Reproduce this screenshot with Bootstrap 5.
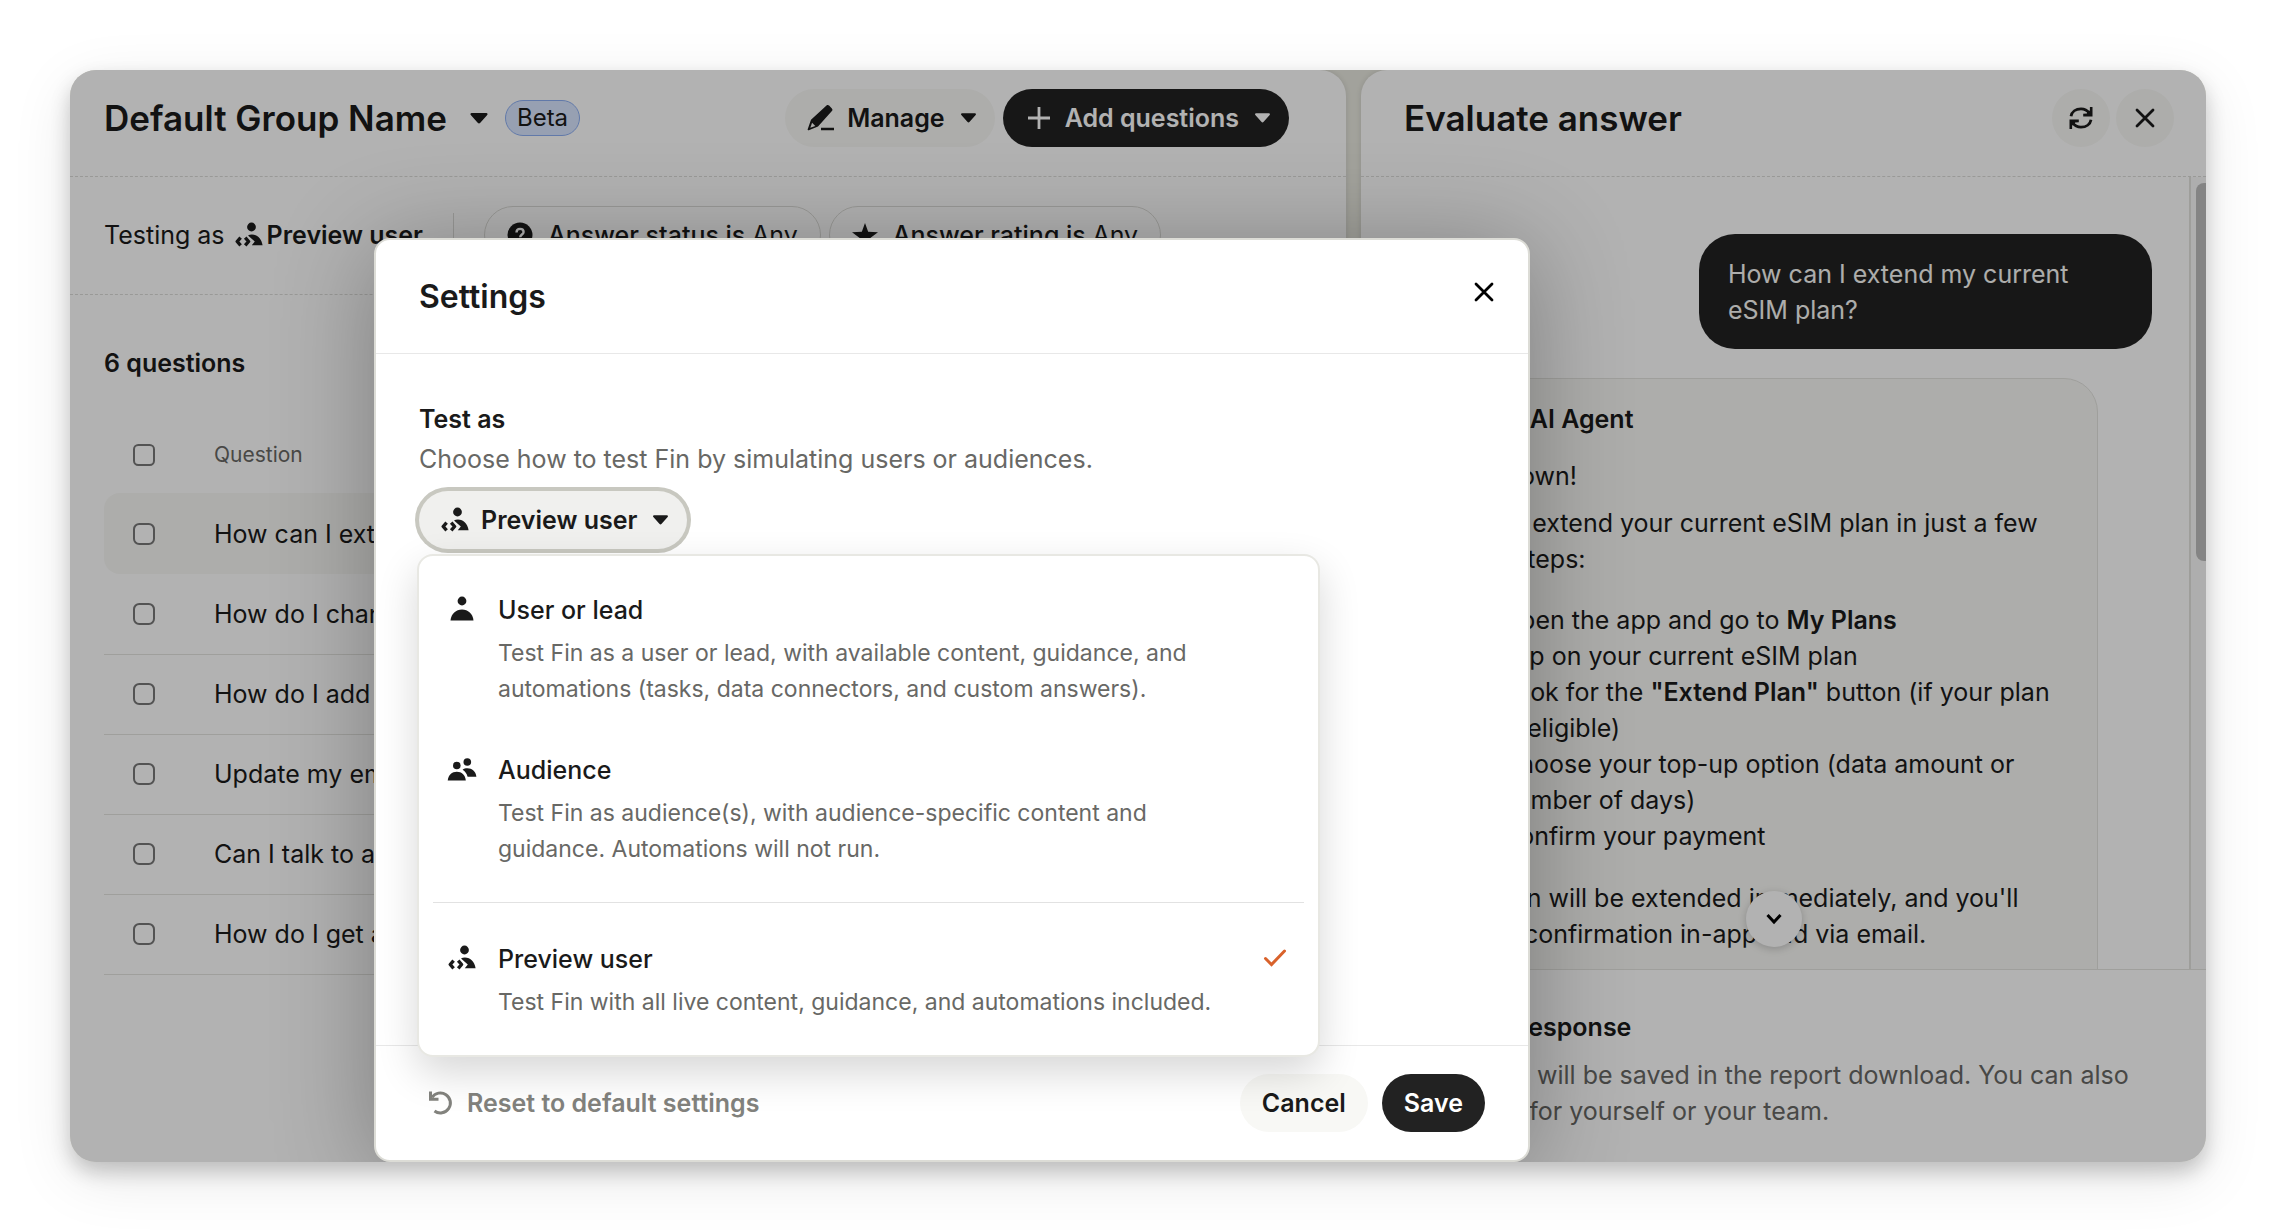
<!DOCTYPE html>
<html lang="en">
<head>
<meta charset="utf-8">
<meta name="viewport" content="width=device-width, initial-scale=1">
<title>Default Group Name – Settings</title>
<link href="https://cdn.jsdelivr.net/npm/bootstrap@5.3.0/dist/css/bootstrap.min.css" rel="stylesheet">
<style>
  :root { --ink:#1a1a1a; --muted:#686865; --line:#e6e6e3; --soft:#f8f8f5; }
  body { font-family: Inter, "Liberation Sans", sans-serif; font-size:25px; line-height:36px; color:var(--ink); background:#fff; padding:70px; }
  .frame { position:relative; min-height:calc(100vh - 140px); border-radius:26px; overflow:hidden; background:#e9e9e0; gap:15px; }
  .frame-shadow { border-radius:26px; box-shadow:0 10px 20px rgba(0,0,0,.2), 0 16px 60px rgba(0,0,0,.1); }
  .panel { background:#fff; border-radius:26px; box-shadow:0 0 6px rgba(0,0,0,.12); min-width:0; }
  .panel-main { flex:1276 1 0; }
  .panel-side { flex:845 1 0; }
  .panel-head { padding:19px 57px 29px 34px; border-bottom:1px dashed #dcdcd8; height:107px; }
  .panel-side .panel-head { padding-left:43px; padding-right:32px; }
  .panel-title { font-size:35px; line-height:58px; font-weight:600; margin:0; }
  .panel-caret { margin:0 16px 0 22px; }
  .beta { font-size:24px; line-height:34px; font-weight:400; color:var(--ink); background:#d9e6ff; border:1px solid #8caef2; border-radius:18px; padding:0 11px; }
  .pill { height:58px; border-radius:29px; font-size:25px; line-height:36px; font-weight:600; border:0; padding:0 22px; display:inline-flex; align-items:center; color:var(--ink); }
  .pill-menu { padding-right:18px; gap:12px; }
  .pill-menu .tip { margin-left:3px; }
  .pill-soft, .pill-soft:hover { background:var(--soft); color:var(--ink); }
  .pill-dark, .pill-dark:hover { background:#222; color:#fff; }
  .pill-line { background:#fff; border:1px solid #dcdcd8; font-weight:500; gap:15px; }
  .pill-line .any { font-weight:400; }
  .pill-round { width:58px; padding:0; justify-content:center; }
  .round-pair { gap:6px; }
  .filters { padding:29px 34px 30px; border-bottom:1px dashed #dcdcd8; height:118px; white-space:nowrap; }
  .filters .coder { margin:0 4px 0 10px; }
  .filters .rule { width:1px; height:44px; margin:0 30px; background:#dcdcd8; }
  .questions { padding:50px 34px 0; }
  .questions h2 { font-size:25px; line-height:36px; font-weight:600; margin:0 0 36px; }
  .q-table { --bs-table-bg:transparent; color:var(--ink); margin:0; }
  .q-table td, .q-table th { height:80px; vertical-align:middle; padding:0; border-bottom:1px solid #e4e4e0; color:var(--ink); }
  .q-table thead th { height:76px; border:0; font-size:21px; font-weight:400; color:var(--muted); }
  .q-table .picked td { height:81px; background:var(--soft); border:0; }
  .q-table .picked td:first-child { border-radius:16px 0 0 16px; }
  .q-table .picked td:last-child { border-radius:0 16px 16px 0; }
  .q-table .tick { width:110px; padding-left:29px; }
  .q-table input { width:22px; height:22px; margin:0; display:block; border:2px solid #777; border-radius:5px; }
  .chat { height:792px; overflow:hidden; }
  .chat-body { flex:1; padding:57px 37px 0 44px; border-right:2px solid #e2e2df; min-width:0; }
  .chat-rail { width:15px; background:#fafafa; padding:6px 0 0 5px; }
  .chat-thumb { height:378px; width:20px; border-radius:8px; background:#bebebe; }
  .ask { width:453px; background:#222; color:#f8f8f5; border-radius:36px; padding:22px 29px 21px; margin:0 0 29px auto; }
  .reply { margin-right:54px; height:800px; background:var(--soft); border:1px solid #e4e4e0; border-radius:34px; padding:22px 24px; white-space:nowrap; }
  .reply p, .reply ol { margin:0; }
  .reply .greeting { padding:21px 0 11px; }
  .reply ol { padding:25px 0 26px 71px; }
  .reply b { font-weight:600; }
  .rate { border-top:1px solid #e4e4e0; padding:39px 44px 0; white-space:nowrap; }
  .rate h2 { font-size:25px; line-height:36px; font-weight:600; margin:0 0 12px; }
  .text-soft { color:var(--muted); }
  .jump { position:absolute; right:404px; top:821px; width:56px; height:56px; border-radius:50%; border:0; background:#fff; box-shadow:0 2px 8px rgba(0,0,0,.2); }
  .veil { position:absolute; inset:0; background:rgba(0,0,0,.3); padding:168px 0 0 304px; }
  .dialog { width:1156px; background:#fff; border:2px solid #dcdcd6; border-radius:16px; box-shadow:0 10px 100px rgba(0,0,0,.3); }
  .dialog-head { height:114px; padding:0 28px 0 43px; border-bottom:1px solid #e8e8e8; }
  .dialog-head h1 { font-size:32px; line-height:40px; font-weight:600; margin:0; }
  .icon-btn { background:none; border:0; padding:0; width:32px; height:32px; margin-bottom:10px; }
  .dialog-body { height:691px; padding:47px 43px 0; }
  .dialog-body label { font-weight:600; display:block; margin-bottom:4px; }
  .choice, .choice:hover { background:#f0f0ee; box-shadow:0 0 0 4px #c8c8c0; margin-top:14px; }
  .pick-menu { position:absolute; left:-2px; top:77px; width:903px; background:#fff; border:2px solid #e8e8e3; border-radius:16px; padding:13px 14px; box-shadow:0 16px 40px rgba(0,0,0,.16); }
  .menu-row { width:100%; background:none; border:0; padding:23px 17px 22px 14px; text-align:left; display:flex; gap:21px; color:var(--ink); line-height:36px; }
  .menu-row .name { font-weight:500; display:block; margin-bottom:7px; }
  .menu-row .note { font-size:23px; color:var(--muted); display:block; }
  .pick-menu hr { margin:13px 0 15px; border-top:1px solid #e2e2e2; opacity:1; }
  .dialog-foot { height:115px; border-top:1px solid #e8e8e8; padding:28px 43px; gap:14px; }
  .reset { background:none; border:0; padding:0 0 0 9px; gap:13px; color:#82827d; font-weight:600; font-size:25px; line-height:36px; }
  svg { flex:none; }
</style>
<script src="https://cdn.jsdelivr.net/npm/bootstrap@5.3.0/dist/js/bootstrap.bundle.min.js"></script>
</head>
<body>
<svg width="0" height="0" class="position-absolute" aria-hidden="true">
  <defs>
    <symbol id="caret" viewBox="0 0 18 12"><path d="M2.200 1h13.600c1 0 1.500 1.100.8 1.800l-6.400 7.200a1.600 1.600 0 0 1-2.400 0L1.400 2.800C.7 2.100 1.200 1 2.200 1z" fill="currentColor"/></symbol>
    <symbol id="coder" viewBox="0 0 28 26"><circle cx="16.500" cy="5" r="4.400" fill="currentColor"/><path d="M13 13.400c1-.5 2.400-.8 3.900-.8 5.800 0 9.600 4.200 10.700 10.600H16.800l3-3.700z" fill="currentColor"/><path d="M5.600 15.600 2.200 19.500l3.400 3.900M10.200 15.600l3.400 3.900-3.400 3.900" fill="none" stroke="currentColor" stroke-width="3.400" stroke-linejoin="round"/></symbol>
    <symbol id="person" viewBox="0 0 30 26"><circle cx="15" cy="5" r="4.400" fill="currentColor"/><path d="M3.500 24.500C4.200 17.500 9 13.500 15 13.500s10.800 4 11.500 11z" fill="currentColor"/></symbol>
    <symbol id="people" viewBox="0 0 30 26"><circle cx="9.800" cy="9.500" r="3.800" fill="currentColor"/><circle cx="20.300" cy="6" r="3.800" fill="currentColor"/><path d="M.7 24.500c.6-5.600 4.300-8.700 9.100-8.700s8.500 3.100 9 8.700z" fill="currentColor"/><path d="M15.600 13.700c1.300-1 2.900-1.400 4.700-1.400 4.800 0 8.500 3 9.100 8.500h-8.800c-.8-3.200-2.500-5.600-5-7.100z" fill="currentColor"/></symbol>
    <symbol id="cross" viewBox="0 0 22 22"><path d="M3 3l16 16M19 3L3 19" stroke="currentColor" stroke-width="2.800" stroke-linecap="round" fill="none"/></symbol>
  </defs>
</svg>

<div class="frame-shadow">
<div class="frame d-flex">
  <main class="panel panel-main">
    <header class="panel-head d-flex align-items-center">
      <h1 class="panel-title text-nowrap">Default Group Name</h1>
      <svg class="panel-caret" width="20" height="13"><use href="#caret"/></svg>
      <span class="beta">Beta</span>
      <div class="ms-auto d-flex gap-2">
        <button class="btn pill pill-menu pill-soft" type="button">
          <svg width="28" height="28" viewBox="0 0 28 28"><path d="M19.500 1.500c.8-.8 1.900-.6 2.600.1l2.800 2.900c.7.8.8 1.800 0 2.600L11 22.500 1.800 26.300c-.8.2-1.300-.3-1.100-1.100L4 15.800z" fill="currentColor"/><path d="M3.300 23.700l1.800-5 3.200 3.200z" fill="#f8f8f5"/><path d="M14 25h13" stroke="currentColor" stroke-width="2.600"/></svg>
          <span>Manage</span><svg class="tip" width="17" height="12"><use href="#caret"/></svg>
        </button>
        <button class="btn pill pill-menu pill-dark" type="button">
          <svg width="28" height="24" viewBox="0 0 28 24"><path d="M14 1v22M3 12h22" stroke="currentColor" stroke-width="2.800"/></svg>
          <span>Add questions</span><svg class="tip" width="17" height="12"><use href="#caret"/></svg>
        </button>
      </div>
    </header>
    <div class="filters d-flex align-items-center">
      <span>Testing as</span>
      <svg class="coder" width="28" height="26"><use href="#coder"/></svg>
      <b class="fw-semibold">Preview user</b>
      <span class="rule"></span>
      <button class="btn pill pill-line me-2" type="button">
        <svg width="26" height="26" viewBox="0 0 26 26"><circle cx="13" cy="13" r="12.500" fill="currentColor"/><path d="M9.500 10.500c0-2.200 1.500-3.600 3.600-3.600s3.500 1.300 3.500 3.100c0 2.400-3.400 2.700-3.400 5.200M13.200 17.500v2.400" stroke="#fff" stroke-width="2.400" fill="none"/></svg>
        <span>Answer status is <span class="any">Any</span></span>
      </button>
      <button class="btn pill pill-line" type="button">
        <svg width="26" height="26" viewBox="0 0 28 26"><path d="M14 0l3.400 9.600L28 10l-8.300 6.300L22.600 26 14 20.200 5.400 26l2.900-9.700L0 10l10.600-.4z" fill="currentColor"/></svg>
        <span>Answer rating is <span class="any">Any</span></span>
      </button>
    </div>
    <section class="questions">
      <h2>6 questions</h2>
      <table class="table q-table">
        <thead><tr><th class="tick"><input class="form-check-input" type="checkbox" aria-label="Select all"></th><th>Question</th></tr></thead>
        <tbody>
          <tr class="picked"><td class="tick"><input class="form-check-input" type="checkbox" aria-label="Select question 1"></td><td>How can I extend my current eSIM plan?</td></tr>
          <tr><td class="tick"><input class="form-check-input" type="checkbox" aria-label="Select question 2"></td><td>How do I change my plan?</td></tr>
          <tr><td class="tick"><input class="form-check-input" type="checkbox" aria-label="Select question 3"></td><td>How do I add more data?</td></tr>
          <tr><td class="tick"><input class="form-check-input" type="checkbox" aria-label="Select question 4"></td><td>Update my email address</td></tr>
          <tr><td class="tick"><input class="form-check-input" type="checkbox" aria-label="Select question 5"></td><td>Can I talk to a human?</td></tr>
          <tr><td class="tick"><input class="form-check-input" type="checkbox" aria-label="Select question 6"></td><td>How do I get a refund?</td></tr>
        </tbody>
      </table>
    </section>
  </main>

  <aside class="panel panel-side">
    <header class="panel-head d-flex align-items-center">
      <h2 class="panel-title">Evaluate answer</h2>
      <div class="ms-auto d-flex round-pair">
        <button class="btn pill pill-soft pill-round" type="button" aria-label="Refresh"><svg width="24" height="24" viewBox="0 0 24 24"><path d="M2 10.300C2.800 5.600 6.900 2.800 12 2.800c3.600 0 6.400 1.600 8.200 4.400M22 13.700c-.8 4.700-4.900 7.500-10 7.500-3.600 0-6.400-1.600-8.200-4.400" fill="none" stroke="currentColor" stroke-width="2.800"/><path d="M23.500 1v9.400h-9.300v-2.600l3.600-.4 3.100-3.200V1zM.5 23v-9.400h9.300v2.600l-3.600.4-3.100 3.200V23z" fill="currentColor"/></svg></button>
        <button class="btn pill pill-soft pill-round" type="button" aria-label="Close panel"><svg width="22" height="22"><use href="#cross"/></svg></button>
      </div>
    </header>
    <div class="chat d-flex">
      <div class="chat-body">
        <div class="ask">How can I extend my current eSIM plan?</div>
        <div class="reply">
          <p class="d-flex align-items-center gap-2"><svg width="30" height="26" viewBox="0 0 30 26"><rect x="2" y="2" width="22" height="22" rx="6" fill="currentColor"/></svg><b>Fin &bull; AI Agent</b></p>
          <p class="greeting">Hi G. Brown!</p>
          <p>You can extend your current eSIM plan in just a few<br>simple steps:</p>
          <ol>
            <li>Open the app and go to <b>My Plans</b></li>
            <li>Tap on your current eSIM plan</li>
            <li>Look for the <b>"Extend Plan"</b> button (if your plan<br>is eligible)</li>
            <li>Choose your top-up option (data amount or<br>number of days)</li>
            <li>Confirm your payment</li>
          </ol>
          <p>Your plan will be extended immediately, and you'll<br>see the confirmation in-app and via email.</p>
        </div>
      </div>
      <div class="chat-rail"><div class="chat-thumb"></div></div>
    </div>
    <div class="rate">
      <h2>Rate that response</h2>
      <p class="text-soft m-0">This rating will be saved in the report download. You can also<br>add notes for yourself or your team.</p>
    </div>
  </aside>

  <button class="jump d-flex align-items-center justify-content-center" type="button" aria-label="Scroll down"><svg width="16" height="12" viewBox="0 0 16 12"><path d="M1.500 2L8 9l6.500-7" fill="none" stroke="currentColor" stroke-width="3"/></svg></button>

  <div class="veil">
    <div class="dialog" role="dialog" aria-labelledby="dlg">
      <div class="dialog-head d-flex align-items-center justify-content-between">
        <h1 id="dlg">Settings</h1>
        <button class="icon-btn d-flex align-items-center justify-content-center" type="button" aria-label="Close"><svg width="22" height="22"><use href="#cross"/></svg></button>
      </div>
      <div class="dialog-body">
        <label for="testas">Test as</label>
        <div class="text-soft">Choose how to test Fin by simulating users or audiences.</div>
        <div class="position-relative">
          <button id="testas" class="btn pill pill-menu choice" type="button">
            <svg width="28" height="26"><use href="#coder"/></svg>
            <span>Preview user</span><svg class="tip" width="17" height="12"><use href="#caret"/></svg>
          </button>
          <div class="pick-menu">
            <button class="menu-row" type="button"><svg class="mt-1" width="30" height="26"><use href="#person"/></svg><span><span class="name">User or lead</span><span class="note">Test Fin as a user or lead, with available content, guidance, and<br>automations (tasks, data connectors, and custom answers).</span></span></button>
            <button class="menu-row" type="button"><svg class="mt-1" width="30" height="26"><use href="#people"/></svg><span><span class="name">Audience</span><span class="note">Test Fin as audience(s), with audience-specific content and<br>guidance. Automations will not run.</span></span></button>
            <hr>
            <button class="menu-row" type="button"><svg class="mt-1" width="30" height="26"><use href="#coder"/></svg><span><span class="name">Preview user</span><span class="note">Test Fin with all live content, guidance, and automations included.</span></span><svg class="ms-auto mt-2" width="24" height="18" viewBox="0 0 24 18"><path d="M2.500 9.500l6 6L21.500 2" fill="none" stroke="#d9622b" stroke-width="3" stroke-linecap="round"/></svg></button>
          </div>
        </div>
      </div>
      <div class="dialog-foot d-flex align-items-center">
        <button class="btn reset d-flex align-items-center me-auto" type="button"><svg width="26" height="26" viewBox="0 0 26 26"><path d="M4 7.500A10 10 0 1 1 6.500 21" fill="none" stroke="currentColor" stroke-width="3"/><path d="M2.500 1.500v7.800h8" fill="none" stroke="currentColor" stroke-width="3"/></svg><span>Reset to default settings</span></button>
        <button class="btn pill pill-soft" type="button">Cancel</button>
        <button class="btn pill pill-dark" type="button">Save</button>
      </div>
    </div>
  </div>
</div>
</div>
</body>
</html>
